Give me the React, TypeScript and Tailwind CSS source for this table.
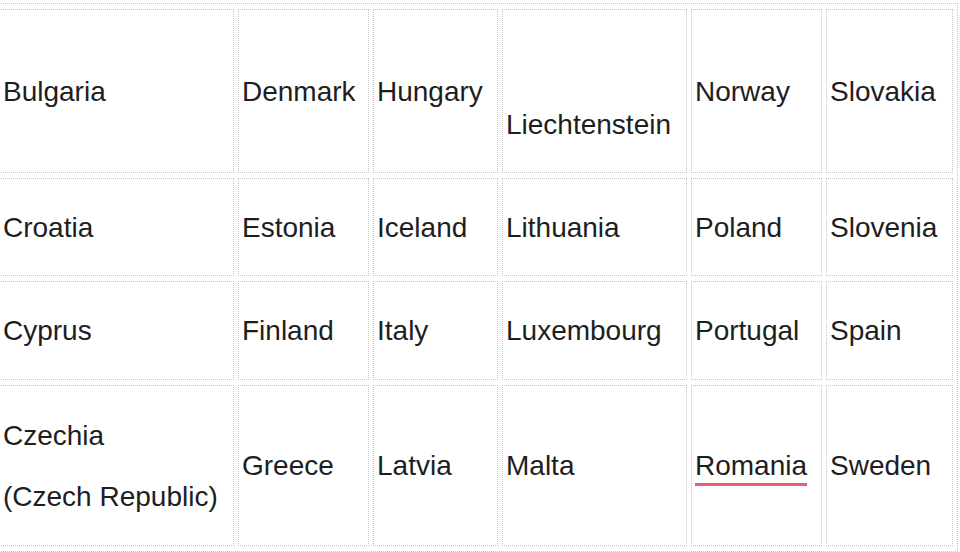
import React from 'react';

type Cell = { lines: string[]; mark?: boolean; low?: boolean };

const ROWS: { h: string; cells: Cell[] }[] = [
  {
    h: 'h-[164px]',
    cells: [
      { lines: ['Bulgaria'] },
      { lines: ['Denmark'] },
      { lines: ['Hungary'] },
      { lines: ['', 'Liechtenstein'], low: true },
      { lines: ['Norway'] },
      { lines: ['Slovakia'] },
    ],
  },
  {
    h: 'h-[98px]',
    cells: [
      { lines: ['Croatia'] },
      { lines: ['Estonia'] },
      { lines: ['Iceland'] },
      { lines: ['Lithuania'] },
      { lines: ['Poland'] },
      { lines: ['Slovenia'] },
    ],
  },
  {
    h: 'h-[99px]',
    cells: [
      { lines: ['Cyprus'] },
      { lines: ['Finland'] },
      { lines: ['Italy'] },
      { lines: ['Luxembourg'] },
      { lines: ['Portugal'] },
      { lines: ['Spain'] },
    ],
  },
  {
    h: 'h-[161px]',
    cells: [
      { lines: ['Czechia', '(Czech Republic)'] },
      { lines: ['Greece'] },
      { lines: ['Latvia'] },
      { lines: ['Malta'] },
      { lines: ['Romania'], mark: true },
      { lines: ['Sweden'] },
    ],
  },
];

export default function App() {
  return (
    <div className="min-h-[552px] w-[960px] overflow-hidden bg-white font-['Liberation_Sans',Arial,sans-serif] text-[28px] text-[#1e1e1e]">
      <table className="-ml-[6px] mt-[3px] table-fixed border-separate border-spacing-x-[4px] border-spacing-y-[5px] border border-dotted border-[#c4c4c4]">
        <colgroup>
          <col className="w-[235px]" />
          <col className="w-[131px]" />
          <col className="w-[125px]" />
          <col className="w-[185px]" />
          <col className="w-[131px]" />
          <col className="w-[127px]" />
        </colgroup>
        <tbody>
          {ROWS.map((row, i) => (
            <tr key={i}>
              {row.cells.map((cell, j) => (
                <td
                  key={j}
                  className={`${row.h} ${cell.low ? 'pt-[6px]' : ''} border border-dotted border-[#c4c4c4] pl-[3px] pr-0 align-middle leading-[61px] whitespace-nowrap`}
                >
                  {cell.lines.map((line, k) => (
                    <div key={k} className="h-[61px]">
                      {cell.mark ? (
                        <span className="underline decoration-[#e4636b] decoration-[3px] underline-offset-[8px]">
                          {line}
                        </span>
                      ) : (
                        line
                      )}
                    </div>
                  ))}
                </td>
              ))}
            </tr>
          ))}
        </tbody>
      </table>
    </div>
  );
}
